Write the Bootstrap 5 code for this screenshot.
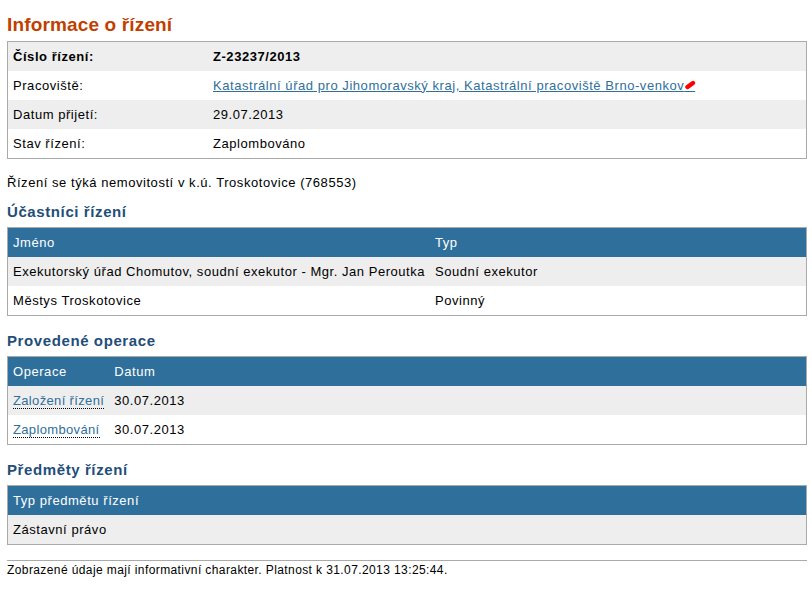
<!DOCTYPE html>
<html lang="cs">
<head>
    <meta charset="UTF-8">
    <title>Informace o řízení</title>
    <link href="https://cdn.jsdelivr.net/npm/bootstrap@5.3.0/dist/css/bootstrap.min.css" rel="stylesheet">
    <style>
        body {
            font-family: "Liberation Sans", Arial, sans-serif;
            font-size: 13px;
            letter-spacing: .55px;
            color: #000;
            background: #fff;
            padding: 14px 5px 0 7px;
        }
        .page-title {
            font-family: "Liberation Sans", Arial, sans-serif;
            font-size: 19px;
            line-height: 22px;
            font-weight: 700;
            letter-spacing: .15px;
            color: #c13f00;
            margin: 0 0 5px;
        }
        .section-title {
            font-size: 15px;
            line-height: 18px;
            font-weight: 700;
            letter-spacing: .6px;
            color: #1f4e79;
            margin: 0 0 6px;
            padding-top: 1px;
        }
        .data-box {
            border: 1px solid #aaa;
            margin-bottom: 15px;
        }
        .data-table {
            width: 100%;
            margin: 0;
        }
        .data-table th, .data-table td {
            height: 29px;
            padding: 0 5px;
            font-weight: 400;
            vertical-align: middle;
            border: 0;
            white-space: nowrap;
        }
        .data-table thead th {
            background: #2f6f9c;
            color: #fff;
        }
        .data-table tbody tr:nth-child(odd) td { background: #eee; }
        .data-table tbody tr:nth-child(even) td { background: #fff; }
        .data-table tbody .strong-row td { font-weight: 700; }
        .fit-col { width: 1%; }
        .label-col { width: 200px; }
        .party-col { letter-spacing: .53px; }
        .office-link {
            color: #2f6f9c;
            text-decoration: underline;
        }
        .oper-link {
            color: #2f6f9c;
            letter-spacing: .35px;
            text-decoration: none;
            border-bottom: 1px dotted #000;
        }
        .ext-wrap {
            position: relative;
            letter-spacing: 0;
        }
        .ext-mark {
            position: absolute;
            left: 1px;
            top: 2px;
        }
        .scope-note {
            margin: 0 0 10px;
            line-height: 18px;
        }
        .foot-note {
            font-size: 12px;
            letter-spacing: .4px;
            border-top: 1px solid #aaa;
            margin: 0;
            padding-top: 2px;
            line-height: 15px;
        }
    </style>
</head>
<body>
<h1 class="page-title">Informace o řízení</h1>

<div class="data-box">
    <table class="data-table">
        <tbody>
        <tr class="strong-row"><td class="label-col">Číslo řízení:</td><td>Z-23237/2013</td></tr>
        <tr><td class="label-col">Pracoviště:</td><td><a class="office-link" href="#">Katastrální úřad pro Jihomoravský kraj, Katastrální pracoviště Brno-venkov<span class="ext-wrap">&nbsp;&nbsp;&nbsp;<svg class="ext-mark" width="11" height="10" viewBox="0 0 11 10"><path d="M2.5 7 L8 3" stroke="#f00" stroke-width="4.4" stroke-linecap="round"/></svg></span></a></td></tr>
        <tr><td class="label-col">Datum přijetí:</td><td>29.07.2013</td></tr>
        <tr><td class="label-col">Stav řízení:</td><td>Zaplombováno</td></tr>
        </tbody>
    </table>
</div>

<p class="scope-note">Řízení se týká nemovitostí v k.ú. Troskotovice (768553)</p>

<h2 class="section-title">Účastníci řízení</h2>
<div class="data-box">
    <table class="data-table">
        <thead><tr><th class="fit-col">Jméno</th><th>Typ</th></tr></thead>
        <tbody>
        <tr><td class="fit-col party-col">Exekutorský úřad Chomutov, soudní exekutor - Mgr. Jan Peroutka</td><td>Soudní exekutor</td></tr>
        <tr><td class="fit-col">Městys Troskotovice</td><td>Povinný</td></tr>
        </tbody>
    </table>
</div>

<h2 class="section-title">Provedené operace</h2>
<div class="data-box">
    <table class="data-table">
        <thead><tr><th class="fit-col">Operace</th><th>Datum</th></tr></thead>
        <tbody>
        <tr><td class="fit-col"><a class="oper-link" href="#">Založení řízení</a></td><td>30.07.2013</td></tr>
        <tr><td class="fit-col"><a class="oper-link" href="#">Zaplombování</a></td><td>30.07.2013</td></tr>
        </tbody>
    </table>
</div>

<h2 class="section-title">Předměty řízení</h2>
<div class="data-box">
    <table class="data-table">
        <thead><tr><th>Typ předmětu řízení</th></tr></thead>
        <tbody>
        <tr><td>Zástavní právo</td></tr>
        </tbody>
    </table>
</div>

<p class="foot-note">Zobrazené údaje mají informativní charakter. Platnost k 31.07.2013 13:25:44.</p>

<script src="https://cdn.jsdelivr.net/npm/bootstrap@5.3.0/dist/js/bootstrap.bundle.min.js"></script>
</body>
</html>
